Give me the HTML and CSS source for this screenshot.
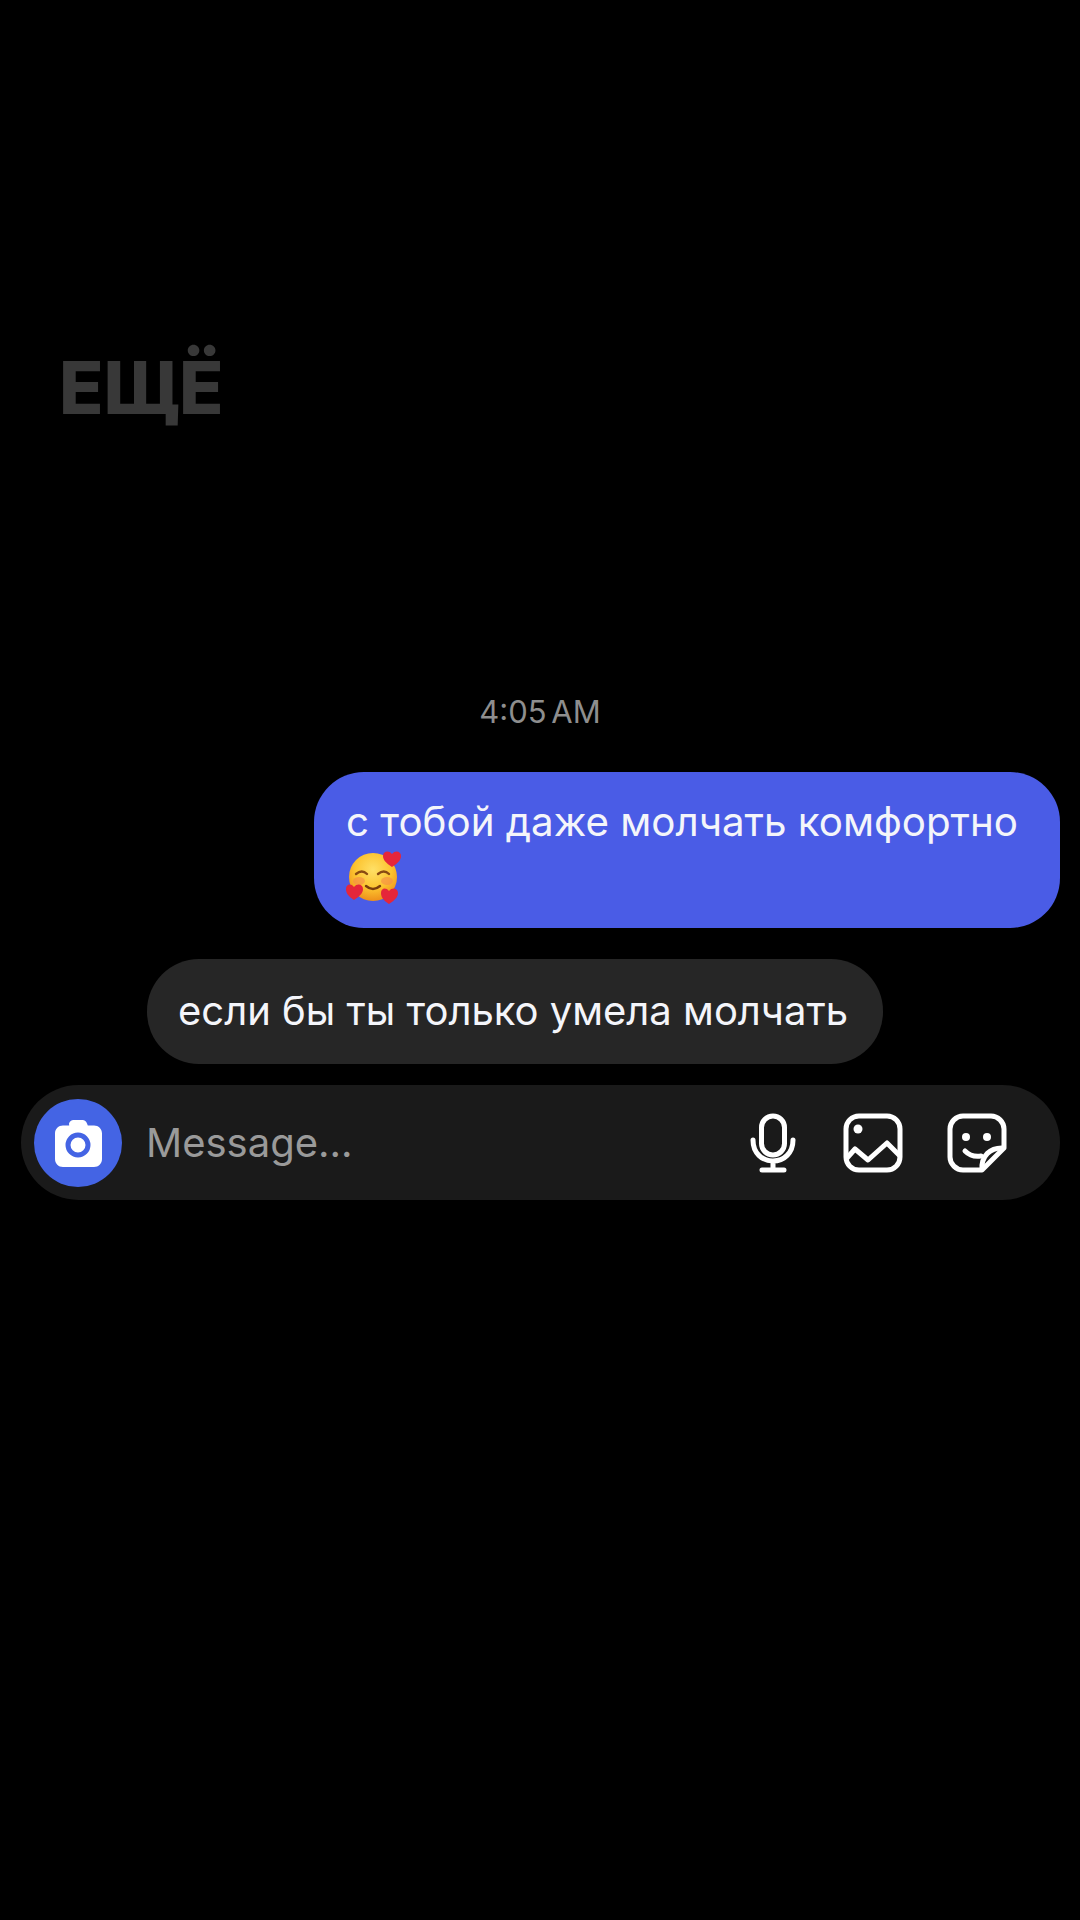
FILE: index.html

```html
<!DOCTYPE html>
<html>
<head>
  <meta charset="UTF-8">
  <title>Chat</title>
  <link rel="stylesheet" href="styles.css">
</head>
<body>
  <div class="watermark">ЕЩЁ</div>

  <div class="time">4:05 AM</div>

  <div class="bubble bubble-out">
    <div>с тобой даже молчать комфортно</div>
    <svg class="emoji" viewBox="0 0 56 54" width="56" height="54">
      <defs>
        <radialGradient id="face" cx="50%" cy="35%" r="65%">
          <stop offset="0" stop-color="#ffe066"/>
          <stop offset="0.6" stop-color="#fcc32f"/>
          <stop offset="1" stop-color="#ee8f1a"/>
        </radialGradient>
      </defs>
      <circle cx="27" cy="27" r="24" fill="url(#face)"/>
      <ellipse cx="13" cy="31" rx="6" ry="4" fill="#f58a4a" opacity="0.6"/>
      <ellipse cx="41" cy="31" rx="6" ry="4" fill="#f58a4a" opacity="0.6"/>
      <path d="M10 24q6-5 11 0M32 24q6-5 11 0" fill="none" stroke="#8a4b12" stroke-width="2.4" stroke-linecap="round"/>
      <path d="M20 36q7 6 14 0" fill="none" stroke="#7a3d0c" stroke-width="2.4" stroke-linecap="round"/>
      <path d="M46 17c-6-4-9-7-9-11 0-5 6-6 9-2 3-4 9-3 9 2 0 4-3 7-9 11z" fill="#e5263a"/>
      <path d="M8 50c-6-4-8-7-8-11 0-5 5-6 8-2 3-4 9-3 9 2 0 4-3 7-9 11z" fill="#e5263a"/>
      <path d="M43 54c-6-4-8-7-8-11 0-5 5-6 8-2 3-4 9-3 9 2 0 4-3 7-9 11z" fill="#e5263a"/>
    </svg>
  </div>

  <div class="bubble bubble-in">если бы ты только умела молчать</div>

  <div class="composer">
    <div class="camera">
      <svg viewBox="0 0 50 48" width="50" height="48">
        <path d="M16 4.500c.8-2.200 2.300-3.500 4.500-3.500h9c2.200 0 3.700 1.300 4.500 3.500l.8 2h6.200c4.500 0 8 3.500 8 8v25.500c0 4.500-3.500 8-8 8h-31c-4.500 0-8-3.500-8-8v-25.500c0-4.500 3.500-8 8-8h6.200z" fill="#fff"/>
        <circle cx="25" cy="26" r="10" fill="none" stroke="#4464e4" stroke-width="5"/>
      </svg>
    </div>
    <div class="placeholder">Message...</div>
    <div class="tools">
      <svg class="mic" viewBox="0 0 46 60" width="46" height="60">
        <rect x="11.500" y="3" width="23" height="39" rx="11.500" fill="none" stroke="#fff" stroke-width="5"/>
        <path d="M3 27c0 13 9 21 20 21s20-8 20-21M23 48v9M12 57h22" fill="none" stroke="#fff" stroke-width="5" stroke-linecap="round"/>
      </svg>
      <svg class="pic" viewBox="0 0 60 60" width="60" height="60">
        <rect x="3" y="3" width="54" height="54" rx="13" fill="none" stroke="#fff" stroke-width="5"/>
        <circle cx="15" cy="16" r="4.500" fill="#fff"/>
        <path d="M4 45l8-9 13 11 19-17 13 13" fill="none" stroke="#fff" stroke-width="5" stroke-linejoin="round"/>
      </svg>
      <svg class="sticker" viewBox="0 0 60 60" width="60" height="60">
        <path d="M35 57h-19c-7 0-13-6-13-13v-28c0-7 6-13 13-13h28c7 0 13 6 13 13v19z" fill="none" stroke="#fff" stroke-width="5" stroke-linejoin="round"/>
        <path d="M57 35c-14-1-23 8-22 22" fill="none" stroke="#fff" stroke-width="5"/>
        <circle cx="19" cy="24" r="4" fill="#fff"/>
        <circle cx="40" cy="24" r="4" fill="#fff"/>
        <path d="M18 38c4 4 10 6 16 5" fill="none" stroke="#fff" stroke-width="5" stroke-linecap="round"/>
      </svg>
    </div>
  </div>
</body>
</html>
```

FILE: styles.css

```css
body {
  margin: 0;
  width: 1080px;
  height: 1920px;
  background: #000;
  color: #f4f5fa;
  font-family: Inter, "Liberation Sans", sans-serif;
  display: flex;
  flex-direction: column;
  overflow: hidden;
}

.watermark {
  margin: 343px 0 0 59px;
  font-size: 73px;
  font-weight: 800;
  line-height: 90px;
  color: #383838;
}

.time {
  margin-top: 259px;
  text-align: center;
  font-size: 31px;
  word-spacing: -4px;
  line-height: 40px;
  color: #8e8e8e;
}

.bubble {
  box-sizing: border-box;
  font-size: 40.3px;
  line-height: 52px;
  white-space: nowrap;
}

.bubble-out {
  align-self: flex-end;
  width: 746px;
  height: 156px;
  margin: 40px 20px 0 0;
  padding: 24px 32px;
  background: #4a5ce6;
  border-radius: 50px;
}

.emoji {
  display: block;
  margin: 2px 0 0 0;
}

.bubble-in {
  align-self: flex-start;
  width: 736px;
  height: 105px;
  margin: 31px 0 0 147px;
  padding: 26px 31px;
  font-size: 40px;
  background: #262626;
  border-radius: 52px;
}

.composer {
  box-sizing: border-box;
  width: 1039px;
  height: 115px;
  margin: 21px 0 0 21px;
  padding: 0 53px 0 13px;
  background: #1a1a1a;
  border-radius: 58px;
  display: flex;
  align-items: center;
}

.camera {
  width: 88px;
  height: 88px;
  border-radius: 50%;
  background: #4464e4;
  display: flex;
  align-items: center;
  justify-content: center;
}

.placeholder {
  margin-left: 24px;
  font-size: 40px;
  color: #9a9a9a;
}

.tools {
  margin-left: auto;
  display: flex;
  align-items: center;
  gap: 44px;
}

.mic {
  margin-right: 3px;
}
```
